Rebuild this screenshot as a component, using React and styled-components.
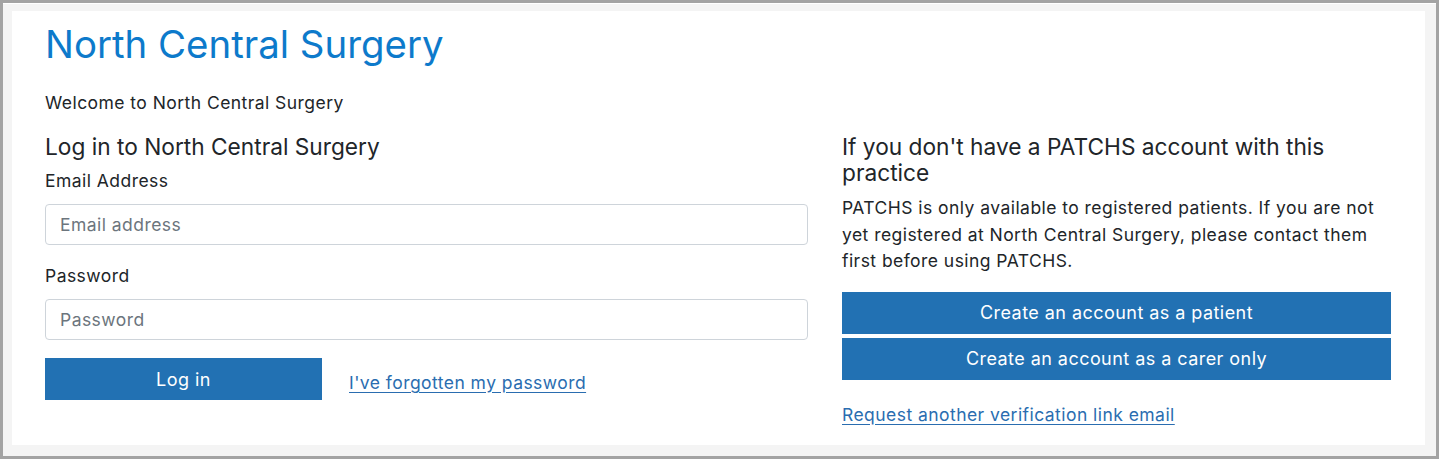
import React from 'react';
import styled, { createGlobalStyle } from 'styled-components';

const Global = createGlobalStyle`
  html, body { margin: 0; padding: 0; }
  body {
    font-family: Inter, "Open Sans", sans-serif;
    color: #212529;
    background: #a3a3a3;
  }
  * { box-sizing: border-box; }
`;

const Frame = styled.div`
  height: 459px;
  border: 3px solid #a3a3a3;
  background: #f4f4f4;
  box-shadow: inset 0 1px 0 #ffffff;
  padding: 8px 11px 11px 9px;
`;

const Card = styled.main`
  background: #ffffff;
  height: 100%;
  padding: 10px 34px 0 33px;
`;

const Title = styled.h1`
  margin: 0;
  font-size: 38.4px;
  font-weight: 400;
  line-height: 46px;
  color: #0d7acb;
`;

const Welcome = styled.p`
  margin: 24px 0 19px;
  font-size: 17.5px;
  letter-spacing: 0.45px;
  line-height: 24px;
`;

const Columns = styled.div`
  display: grid;
  grid-template-columns: 763px 549px;
  column-gap: 34px;
`;

const Column = styled.section`
  display: flex;
  flex-direction: column;
`;

const Heading = styled.h2`
  margin: 0 0 9px;
  font-size: 22.7px;
  font-weight: 400;
  line-height: 26px;
`;

const Label = styled.label`
  display: block;
  font-size: 17.5px;
  letter-spacing: 0.45px;
  line-height: 24px;
  margin-bottom: 11px;
`;

const Field = styled.div`
  margin-bottom: ${p => p.last ? '18px' : '19px'};
`;

const Input = styled.input`
  display: block;
  width: 100%;
  height: 41px;
  padding: 0 14px;
  font-family: inherit;
  font-size: 17.5px;
  letter-spacing: 0.45px;
  color: #212529;
  border: 1px solid #ced4da;
  border-radius: 4px;
  background: #fff;
  &::placeholder { color: #6c757d; }
`;

const Actions = styled.div`
  display: flex;
  align-items: center;
  gap: 27px;
`;

const Button = styled.button`
  display: block;
  width: ${p => p.wide ? '100%' : '277px'};
  height: 42px;
  padding: 0;
  border: 0;
  border-radius: 0;
  background: #2271b3;
  color: #ffffff;
  font-family: inherit;
  font-size: 18px;
  letter-spacing: 0.45px;
  cursor: pointer;
`;

const TextLink = styled.a`
  color: #2a6db0;
  font-size: 17.5px;
  letter-spacing: 0.45px;
  line-height: 24px;
  text-decoration: underline;
  text-underline-offset: 3px;
  margin-top: ${p => p.offset || 0}px;
`;

const Paragraph = styled.p`
  margin: 0 0 17px;
  font-size: 17.5px;
  letter-spacing: 0.45px;
  line-height: 26.5px;
`;

const ButtonStack = styled.div`
  display: flex;
  flex-direction: column;
  gap: 4px;
  margin-bottom: 23px;
`;

export default function App() {
  return (
    <>
      <Global />
      <Frame>
        <Card>
          <Title>North Central Surgery</Title>
          <Welcome>Welcome to North Central Surgery</Welcome>
          <Columns>
            <Column>
              <Heading>Log in to North Central Surgery</Heading>
              <Field>
                <Label htmlFor="email">Email Address</Label>
                <Input id="email" type="email" placeholder="Email address" />
              </Field>
              <Field last>
                <Label htmlFor="password">Password</Label>
                <Input id="password" type="password" placeholder="Password" />
              </Field>
              <Actions>
                <Button>Log in</Button>
                <TextLink href="#" offset={8}>I've forgotten my password</TextLink>
              </Actions>
            </Column>
            <Column>
              <Heading>If you don't have a PATCHS account with this practice</Heading>
              <Paragraph>
                PATCHS is only available to registered patients. If you are not yet registered at
                North Central Surgery, please contact them first before using PATCHS.
              </Paragraph>
              <ButtonStack>
                <Button wide>Create an account as a patient</Button>
                <Button wide>Create an account as a carer only</Button>
              </ButtonStack>
              <div>
                <TextLink href="#">Request another verification link email</TextLink>
              </div>
            </Column>
          </Columns>
        </Card>
      </Frame>
    </>
  );
}
